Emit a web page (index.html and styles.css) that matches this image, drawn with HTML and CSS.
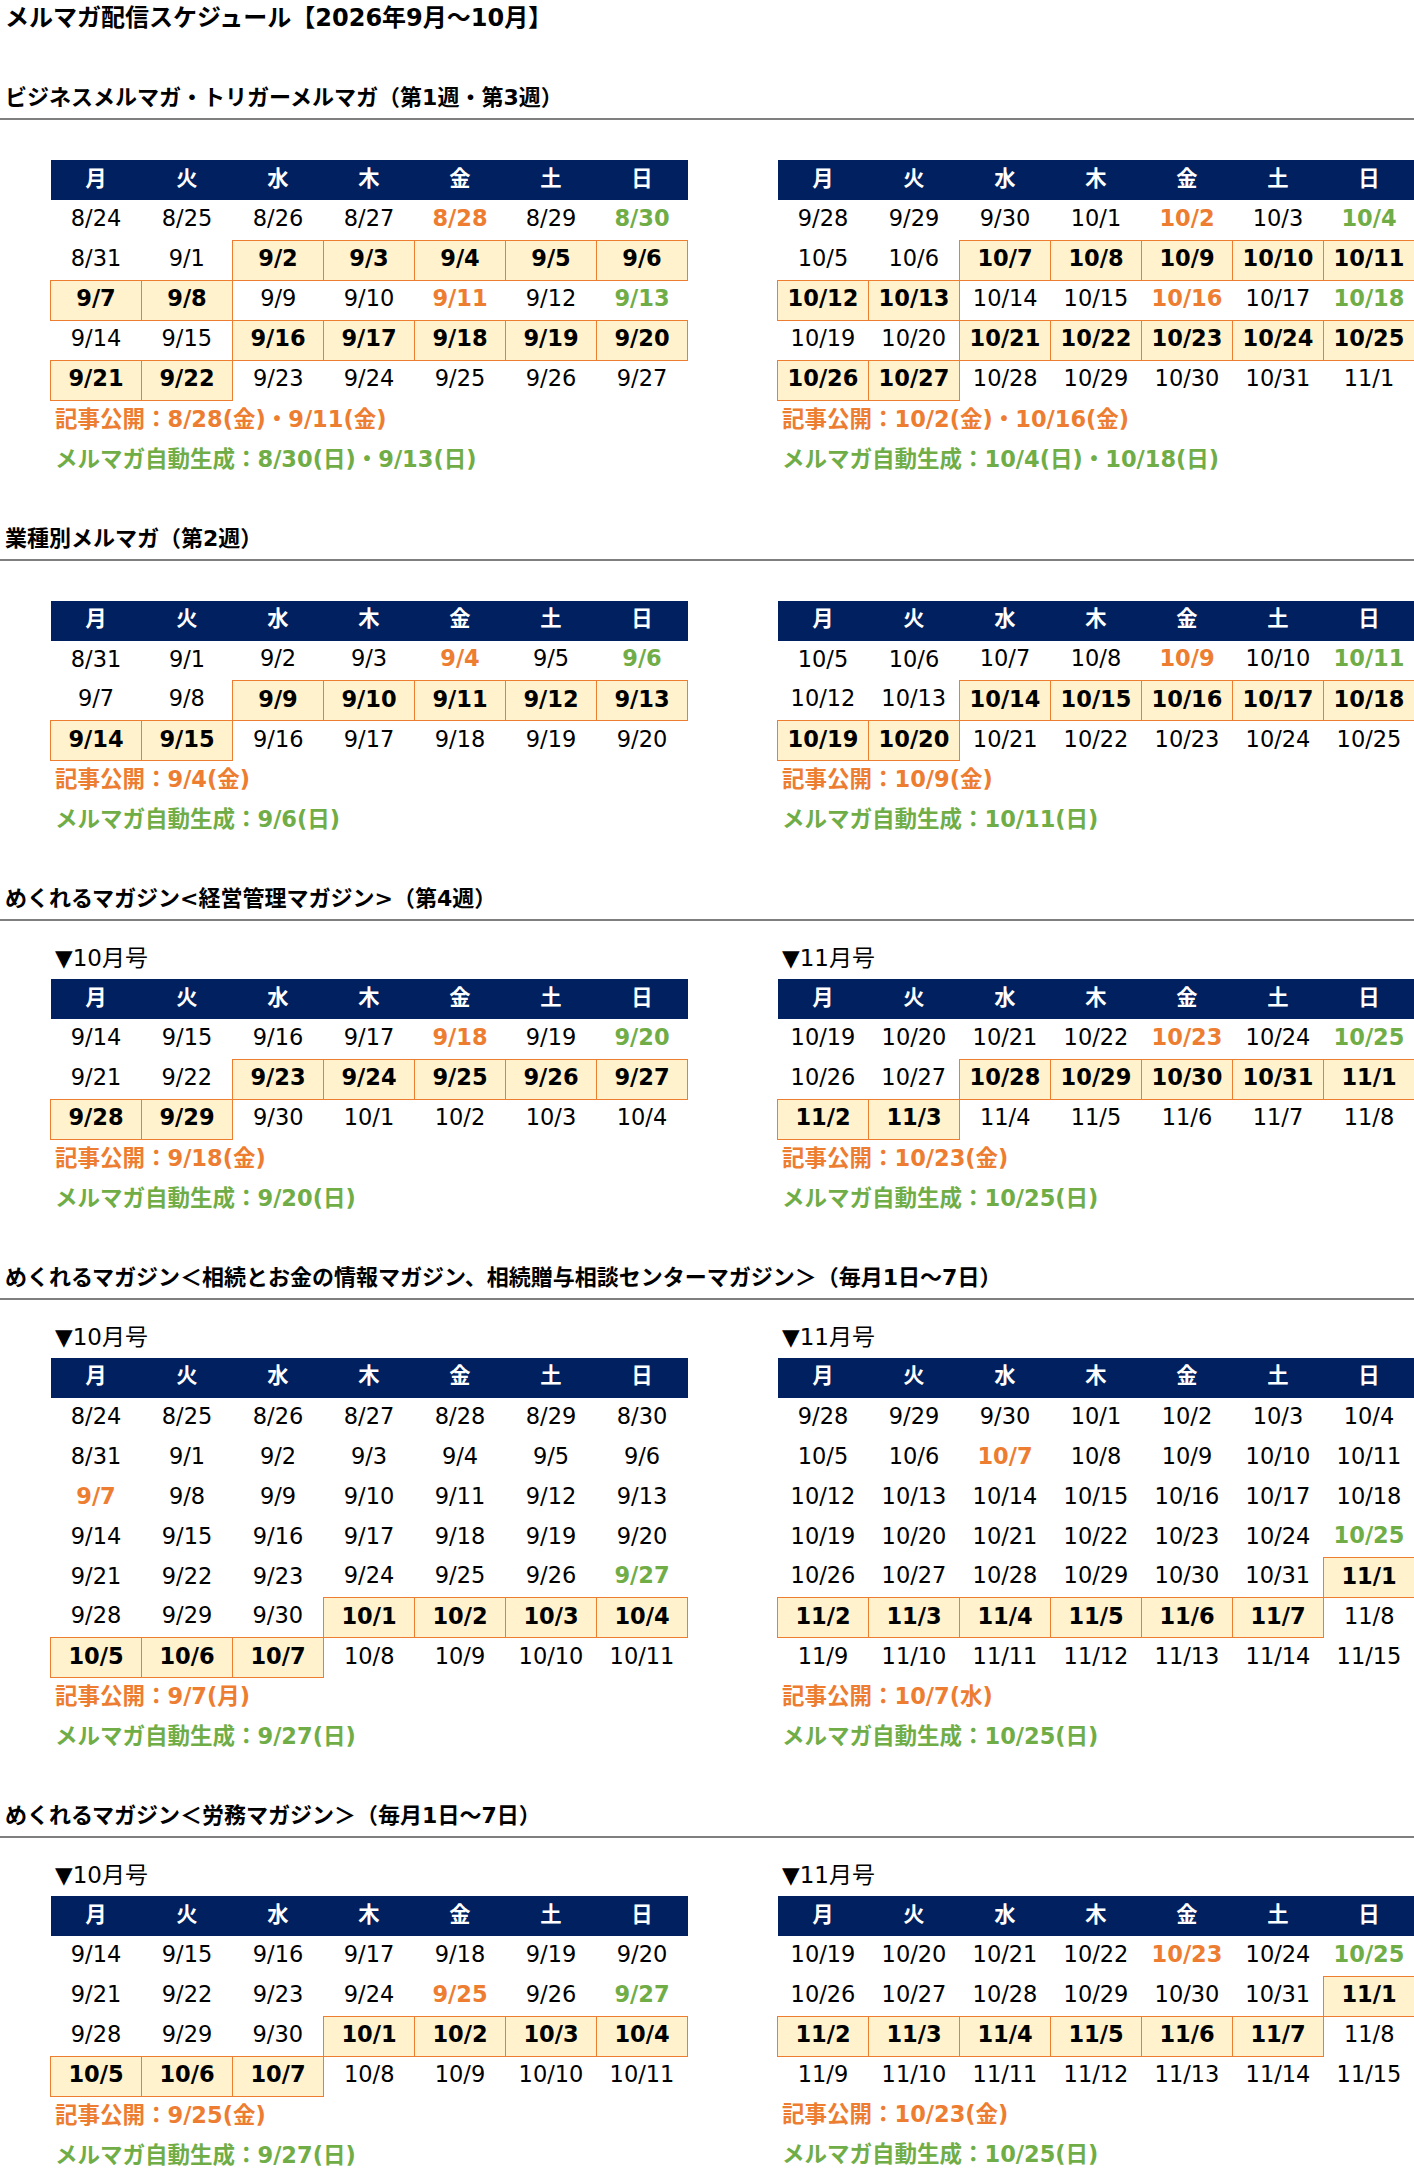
FILE: index.html
```html
<!DOCTYPE html>
<html lang="ja">
<head>
<meta charset="utf-8">
<title>メルマガ配信スケジュール</title>
<link rel="stylesheet" href="styles.css">
</head>
<body>
<h1 class="title">メルマガ配信スケジュール【2026年9月～10月】</h1>

<section class="sec">
  <h2 class="sec-head">ビジネスメルマガ・トリガーメルマガ（第1週・第3週）</h2>
  <div class="cals">
    <div class="cal">
      <table class="month">
        <tr><th>月</th><th>火</th><th>水</th><th>木</th><th>金</th><th>土</th><th>日</th></tr>
        <tr><td>8/24</td><td>8/25</td><td>8/26</td><td>8/27</td><td class="pub">8/28</td><td>8/29</td><td class="auto">8/30</td></tr>
        <tr><td>8/31</td><td>9/1</td><td class="hl">9/2</td><td class="hl">9/3</td><td class="hl">9/4</td><td class="hl">9/5</td><td class="hl">9/6</td></tr>
        <tr><td class="hl">9/7</td><td class="hl">9/8</td><td>9/9</td><td>9/10</td><td class="pub">9/11</td><td>9/12</td><td class="auto">9/13</td></tr>
        <tr><td>9/14</td><td>9/15</td><td class="hl">9/16</td><td class="hl">9/17</td><td class="hl">9/18</td><td class="hl">9/19</td><td class="hl">9/20</td></tr>
        <tr><td class="hl">9/21</td><td class="hl">9/22</td><td>9/23</td><td>9/24</td><td>9/25</td><td>9/26</td><td>9/27</td></tr>
      </table>
      <p class="note pub">記事公開：8/28(金)・9/11(金)</p>
      <p class="note auto">メルマガ自動生成：8/30(日)・9/13(日)</p>
    </div>
    <div class="cal">
      <table class="month">
        <tr><th>月</th><th>火</th><th>水</th><th>木</th><th>金</th><th>土</th><th>日</th></tr>
        <tr><td>9/28</td><td>9/29</td><td>9/30</td><td>10/1</td><td class="pub">10/2</td><td>10/3</td><td class="auto">10/4</td></tr>
        <tr><td>10/5</td><td>10/6</td><td class="hl">10/7</td><td class="hl">10/8</td><td class="hl">10/9</td><td class="hl">10/10</td><td class="hl">10/11</td></tr>
        <tr><td class="hl">10/12</td><td class="hl">10/13</td><td>10/14</td><td>10/15</td><td class="pub">10/16</td><td>10/17</td><td class="auto">10/18</td></tr>
        <tr><td>10/19</td><td>10/20</td><td class="hl">10/21</td><td class="hl">10/22</td><td class="hl">10/23</td><td class="hl">10/24</td><td class="hl">10/25</td></tr>
        <tr><td class="hl">10/26</td><td class="hl">10/27</td><td>10/28</td><td>10/29</td><td>10/30</td><td>10/31</td><td>11/1</td></tr>
      </table>
      <p class="note pub">記事公開：10/2(金)・10/16(金)</p>
      <p class="note auto">メルマガ自動生成：10/4(日)・10/18(日)</p>
    </div>
  </div>
</section>

<section class="sec">
  <h2 class="sec-head">業種別メルマガ（第2週）</h2>
  <div class="cals">
    <div class="cal">
      <table class="month">
        <tr><th>月</th><th>火</th><th>水</th><th>木</th><th>金</th><th>土</th><th>日</th></tr>
        <tr><td>8/31</td><td>9/1</td><td>9/2</td><td>9/3</td><td class="pub">9/4</td><td>9/5</td><td class="auto">9/6</td></tr>
        <tr><td>9/7</td><td>9/8</td><td class="hl">9/9</td><td class="hl">9/10</td><td class="hl">9/11</td><td class="hl">9/12</td><td class="hl">9/13</td></tr>
        <tr><td class="hl">9/14</td><td class="hl">9/15</td><td>9/16</td><td>9/17</td><td>9/18</td><td>9/19</td><td>9/20</td></tr>
      </table>
      <p class="note pub">記事公開：9/4(金)</p>
      <p class="note auto">メルマガ自動生成：9/6(日)</p>
    </div>
    <div class="cal">
      <table class="month">
        <tr><th>月</th><th>火</th><th>水</th><th>木</th><th>金</th><th>土</th><th>日</th></tr>
        <tr><td>10/5</td><td>10/6</td><td>10/7</td><td>10/8</td><td class="pub">10/9</td><td>10/10</td><td class="auto">10/11</td></tr>
        <tr><td>10/12</td><td>10/13</td><td class="hl">10/14</td><td class="hl">10/15</td><td class="hl">10/16</td><td class="hl">10/17</td><td class="hl">10/18</td></tr>
        <tr><td class="hl">10/19</td><td class="hl">10/20</td><td>10/21</td><td>10/22</td><td>10/23</td><td>10/24</td><td>10/25</td></tr>
      </table>
      <p class="note pub">記事公開：10/9(金)</p>
      <p class="note auto">メルマガ自動生成：10/11(日)</p>
    </div>
  </div>
</section>

<section class="sec">
  <h2 class="sec-head">めくれるマガジン&lt;経営管理マガジン&gt;（第4週）</h2>
  <div class="cals issued">
    <div class="cal">
      <p class="issue">▼10月号</p>
      <table class="month">
        <tr><th>月</th><th>火</th><th>水</th><th>木</th><th>金</th><th>土</th><th>日</th></tr>
        <tr><td>9/14</td><td>9/15</td><td>9/16</td><td>9/17</td><td class="pub">9/18</td><td>9/19</td><td class="auto">9/20</td></tr>
        <tr><td>9/21</td><td>9/22</td><td class="hl">9/23</td><td class="hl">9/24</td><td class="hl">9/25</td><td class="hl">9/26</td><td class="hl">9/27</td></tr>
        <tr><td class="hl">9/28</td><td class="hl">9/29</td><td>9/30</td><td>10/1</td><td>10/2</td><td>10/3</td><td>10/4</td></tr>
      </table>
      <p class="note pub">記事公開：9/18(金)</p>
      <p class="note auto">メルマガ自動生成：9/20(日)</p>
    </div>
    <div class="cal">
      <p class="issue">▼11月号</p>
      <table class="month">
        <tr><th>月</th><th>火</th><th>水</th><th>木</th><th>金</th><th>土</th><th>日</th></tr>
        <tr><td>10/19</td><td>10/20</td><td>10/21</td><td>10/22</td><td class="pub">10/23</td><td>10/24</td><td class="auto">10/25</td></tr>
        <tr><td>10/26</td><td>10/27</td><td class="hl">10/28</td><td class="hl">10/29</td><td class="hl">10/30</td><td class="hl">10/31</td><td class="hl">11/1</td></tr>
        <tr><td class="hl">11/2</td><td class="hl">11/3</td><td>11/4</td><td>11/5</td><td>11/6</td><td>11/7</td><td>11/8</td></tr>
      </table>
      <p class="note pub">記事公開：10/23(金)</p>
      <p class="note auto">メルマガ自動生成：10/25(日)</p>
    </div>
  </div>
</section>

<section class="sec">
  <h2 class="sec-head">めくれるマガジン＜相続とお金の情報マガジン、相続贈与相談センターマガジン＞（毎月1日～7日）</h2>
  <div class="cals issued">
    <div class="cal">
      <p class="issue">▼10月号</p>
      <table class="month">
        <tr><th>月</th><th>火</th><th>水</th><th>木</th><th>金</th><th>土</th><th>日</th></tr>
        <tr><td>8/24</td><td>8/25</td><td>8/26</td><td>8/27</td><td>8/28</td><td>8/29</td><td>8/30</td></tr>
        <tr><td>8/31</td><td>9/1</td><td>9/2</td><td>9/3</td><td>9/4</td><td>9/5</td><td>9/6</td></tr>
        <tr><td class="pub">9/7</td><td>9/8</td><td>9/9</td><td>9/10</td><td>9/11</td><td>9/12</td><td>9/13</td></tr>
        <tr><td>9/14</td><td>9/15</td><td>9/16</td><td>9/17</td><td>9/18</td><td>9/19</td><td>9/20</td></tr>
        <tr><td>9/21</td><td>9/22</td><td>9/23</td><td>9/24</td><td>9/25</td><td>9/26</td><td class="auto">9/27</td></tr>
        <tr><td>9/28</td><td>9/29</td><td>9/30</td><td class="hl">10/1</td><td class="hl">10/2</td><td class="hl">10/3</td><td class="hl">10/4</td></tr>
        <tr><td class="hl">10/5</td><td class="hl">10/6</td><td class="hl">10/7</td><td>10/8</td><td>10/9</td><td>10/10</td><td>10/11</td></tr>
      </table>
      <p class="note pub">記事公開：9/7(月)</p>
      <p class="note auto">メルマガ自動生成：9/27(日)</p>
    </div>
    <div class="cal">
      <p class="issue">▼11月号</p>
      <table class="month">
        <tr><th>月</th><th>火</th><th>水</th><th>木</th><th>金</th><th>土</th><th>日</th></tr>
        <tr><td>9/28</td><td>9/29</td><td>9/30</td><td>10/1</td><td>10/2</td><td>10/3</td><td>10/4</td></tr>
        <tr><td>10/5</td><td>10/6</td><td class="pub">10/7</td><td>10/8</td><td>10/9</td><td>10/10</td><td>10/11</td></tr>
        <tr><td>10/12</td><td>10/13</td><td>10/14</td><td>10/15</td><td>10/16</td><td>10/17</td><td>10/18</td></tr>
        <tr><td>10/19</td><td>10/20</td><td>10/21</td><td>10/22</td><td>10/23</td><td>10/24</td><td class="auto">10/25</td></tr>
        <tr><td>10/26</td><td>10/27</td><td>10/28</td><td>10/29</td><td>10/30</td><td>10/31</td><td class="hl">11/1</td></tr>
        <tr><td class="hl">11/2</td><td class="hl">11/3</td><td class="hl">11/4</td><td class="hl">11/5</td><td class="hl">11/6</td><td class="hl">11/7</td><td>11/8</td></tr>
        <tr><td>11/9</td><td>11/10</td><td>11/11</td><td>11/12</td><td>11/13</td><td>11/14</td><td>11/15</td></tr>
      </table>
      <p class="note pub">記事公開：10/7(水)</p>
      <p class="note auto">メルマガ自動生成：10/25(日)</p>
    </div>
  </div>
</section>

<section class="sec">
  <h2 class="sec-head">めくれるマガジン＜労務マガジン＞（毎月1日～7日）</h2>
  <div class="cals issued">
    <div class="cal">
      <p class="issue">▼10月号</p>
      <table class="month">
        <tr><th>月</th><th>火</th><th>水</th><th>木</th><th>金</th><th>土</th><th>日</th></tr>
        <tr><td>9/14</td><td>9/15</td><td>9/16</td><td>9/17</td><td>9/18</td><td>9/19</td><td>9/20</td></tr>
        <tr><td>9/21</td><td>9/22</td><td>9/23</td><td>9/24</td><td class="pub">9/25</td><td>9/26</td><td class="auto">9/27</td></tr>
        <tr><td>9/28</td><td>9/29</td><td>9/30</td><td class="hl">10/1</td><td class="hl">10/2</td><td class="hl">10/3</td><td class="hl">10/4</td></tr>
        <tr><td class="hl">10/5</td><td class="hl">10/6</td><td class="hl">10/7</td><td>10/8</td><td>10/9</td><td>10/10</td><td>10/11</td></tr>
      </table>
      <p class="note pub">記事公開：9/25(金)</p>
      <p class="note auto">メルマガ自動生成：9/27(日)</p>
    </div>
    <div class="cal">
      <p class="issue">▼11月号</p>
      <table class="month">
        <tr><th>月</th><th>火</th><th>水</th><th>木</th><th>金</th><th>土</th><th>日</th></tr>
        <tr><td>10/19</td><td>10/20</td><td>10/21</td><td>10/22</td><td class="pub">10/23</td><td>10/24</td><td class="auto">10/25</td></tr>
        <tr><td>10/26</td><td>10/27</td><td>10/28</td><td>10/29</td><td>10/30</td><td>10/31</td><td class="hl">11/1</td></tr>
        <tr><td class="hl">11/2</td><td class="hl">11/3</td><td class="hl">11/4</td><td class="hl">11/5</td><td class="hl">11/6</td><td class="hl">11/7</td><td>11/8</td></tr>
        <tr><td>11/9</td><td>11/10</td><td>11/11</td><td>11/12</td><td>11/13</td><td>11/14</td><td>11/15</td></tr>
      </table>
      <p class="note pub">記事公開：10/23(金)</p>
      <p class="note auto">メルマガ自動生成：10/25(日)</p>
    </div>
  </div>
</section>
</body>
</html>
```

FILE: styles.css
```css
* {
  box-sizing: border-box;
}

body {
  margin: 0;
  width: 1414px;
  background: #ffffff;
  color: #000000;
  font-family: "DejaVu Sans", "Noto Sans CJK JP", sans-serif;
}

.title {
  margin: 0 0 40px;
  height: 40px;
  padding-left: 5px;
  font-size: 24px;
  line-height: 37px;
  font-weight: bold;
}

.sec + .sec {
  margin-top: 40px;
}

.sec-head {
  margin: 0;
  height: 40px;
  padding-left: 5px;
  border-bottom: 2px solid #7f7f7f;
  font-size: 22px;
  line-height: 36px;
  font-weight: bold;
}

.cals {
  display: grid;
  grid-template-columns: 637px 637px;
  column-gap: 90px;
  padding: 40px 0 0 50px;
}

.cals.issued {
  padding-top: 18px;
}

.issue {
  margin: 0;
  height: 40px;
  padding-left: 5px;
  font-size: 23px;
  line-height: 38px;
  font-weight: normal;
}

.month {
  width: 637px;
  border-collapse: collapse;
  table-layout: fixed;
}

.month th,
.month td {
  width: 91px;
  height: 40px;
  padding: 0 0 3px;
  text-align: center;
  vertical-align: middle;
  line-height: 1.2;
}

.month th {
  background: #002060;
  color: #ffffff;
  font-size: 21.33px;
  font-weight: bold;
}

.month td {
  font-size: 22.5px;
}

.month td.hl {
  background: #fff2cc;
  border: 1px solid #ed7d31;
  font-weight: bold;
}

.month td.pub {
  color: #ed7d31;
  font-weight: bold;
}

.month td.auto {
  color: #70ad47;
  font-weight: bold;
}

.note {
  margin: 0;
  height: 40px;
  padding-left: 5px;
  font-size: 22.5px;
  line-height: 36px;
  font-weight: bold;
}

.note.pub {
  color: #ed7d31;
}

.note.auto {
  color: #70ad47;
}
```
